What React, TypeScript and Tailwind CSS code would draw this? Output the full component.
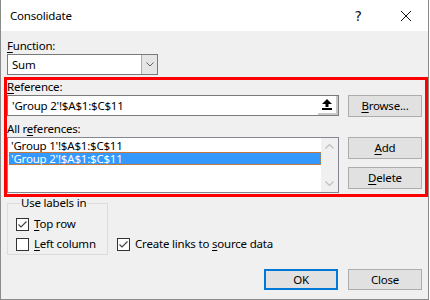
import React from "react";

function U({ children }: { children: React.ReactNode }) {
  return <span className="underline underline-offset-[2px] decoration-[1px]">{children}</span>;
}

function Check({ checked }: { checked: boolean }) {
  return (
    <div className="w-[13px] h-[13px] bg-white border border-[#333] flex items-center justify-center shrink-0">
      {checked && (
        <svg width="11" height="11" viewBox="0 0 11 11">
          <polyline points="1.5,5.5 4,8 9.5,2.5" fill="none" stroke="#444" strokeWidth="1.2" />
        </svg>
      )}
    </div>
  );
}

function Btn({ children, def, h = "h-[22px]" }: { children: React.ReactNode; def?: boolean; h?: string }) {
  return (
    <div
      className={
        "w-[74px] flex items-center justify-center bg-[#e1e1e1] " +
        h +
        " " +
        (def ? "border-2 border-[#0078d7]" : "border border-[#adadad]")
      }
    >
      {children}
    </div>
  );
}

export default function App() {
  return (
    <div className="w-[429px] h-[300px] bg-[#f0f0f0] border-l border-r border-b border-[#8a8a8a] flex flex-col font-['Noto_Sans',sans-serif] text-[11.5px] tracking-[-0.2px] leading-[16px] text-black overflow-hidden">
      {/* title bar */}
      <div className="h-[31px] bg-white flex items-center pl-[9px] shrink-0">
        <span>Consolidate</span>
        <span className="ml-auto text-[14px] tracking-normal font-['DejaVu_Sans',sans-serif] text-[#111] mr-[38px]">?</span>
        <svg width="12" height="12" viewBox="0 0 12 12" className="mr-[16px]">
          <path d="M1 1 L11 11 M11 1 L1 11" stroke="#111" strokeWidth="1" />
        </svg>
      </div>

      {/* body */}
      <div className="flex flex-col">
        <div className="mt-[7px] ml-[6px] h-[16px]">
          <U>F</U>unction:
        </div>
        <div className="ml-[6px] w-[151px] h-[21px] border border-[#7a7a7a] bg-white flex">
          <div className="flex-1 pl-[4px] leading-[19px]">Sum</div>
          <div className="w-[16px] bg-[#e5e5e5] border-l border-[#acacac] flex items-center justify-center">
            <svg width="8" height="5" viewBox="0 0 8 5">
              <polyline points="0.5,0.5 4,4 7.5,0.5" fill="none" stroke="#606060" strokeWidth="1" />
            </svg>
          </div>
        </div>

        {/* red annotation box */}
        <div className="mt-[2px] ml-[3px] w-[424px] h-[120px] border-[3px] border-[#ff0000] flex flex-col">
          <div className="h-[15px] leading-[14px]">
            <U>R</U>eference:
          </div>
          <div className="flex items-start">
            <div className="w-[332px] h-[21px] border border-[#7a7a7a] bg-white flex">
              <div className="flex-1 pl-[4px] leading-[19px]">'Group 2'!$A$1:$C$11</div>
              <div className="w-[20px] h-full bg-[#c8c8c8] pr-[2px] pb-[2px]">
                <div className="w-full h-full bg-white flex items-center justify-center">
                  <svg width="10" height="11" viewBox="0 0 10 11">
                    <path d="M5 0 L10 5 L6.5 5 L6.5 8 L3.5 8 L3.5 5 L0 5 Z" fill="#000" />
                    <rect x="0" y="9" width="10" height="2" fill="#000" />
                  </svg>
                </div>
              </div>
            </div>
            <div className="ml-[9px]">
              <Btn>
                <U>B</U>rowse...
              </Btn>
            </div>
          </div>
          <div className="mt-[4px] h-[16px]">
            All r<U>e</U>ferences:
          </div>
          <div className="flex items-start">
            <div className="w-[332px] h-[56px] border border-[#828790] bg-white flex">
              <div className="flex-1 flex flex-col pt-[1px] pl-[1px] leading-[13px]">
                <div className="h-[13px] pl-[2px]">'Group 1'!$A$1:$C$11</div>
                <div className="h-[13px] pl-[2px] bg-[#3399ff] text-white outline outline-1 outline-dotted outline-[#c87a3c] -outline-offset-1">
                  'Group 2'!$A$1:$C$11
                </div>
              </div>
              <div className="w-[17px] h-full bg-[#f0f0f0] flex flex-col items-center justify-between py-[6px]">
                <svg width="9" height="5" viewBox="0 0 9 5">
                  <polyline points="0.5,4.5 4.5,0.5 8.5,4.5" fill="none" stroke="#c0c0c0" strokeWidth="1.2" />
                </svg>
                <svg width="9" height="5" viewBox="0 0 9 5">
                  <polyline points="0.5,0.5 4.5,4.5 8.5,0.5" fill="none" stroke="#c0c0c0" strokeWidth="1.2" />
                </svg>
              </div>
            </div>
            <div className="ml-[9px] flex flex-col gap-[8px]">
              <Btn>
                <U>A</U>dd
              </Btn>
              <Btn>
                <U>D</U>elete
              </Btn>
            </div>
          </div>
        </div>

        {/* options */}
        <div className="flex items-start ml-[6px] mt-[-1px]">
          <fieldset className="w-[101px] h-[59px] border border-[#dcdcdc] pl-[8px] pt-[4px]">
            <legend className="ml-[4px] px-[1px] leading-[14px]">Use labels in</legend>
            <div className="flex items-center h-[20px] gap-[5px]">
              <Check checked />
              <span>
                <U>T</U>op row
              </span>
            </div>
            <div className="flex items-center h-[20px] gap-[5px]">
              <Check checked={false} />
              <span>
                <U>L</U>eft column
              </span>
            </div>
          </fieldset>
          <div className="ml-[9px] mt-[38px] flex items-center h-[20px] gap-[5px]">
            <Check checked />
            <span>
              Create links to <U>s</U>ource data
            </span>
          </div>
        </div>

        <div className="mt-[14px] flex justify-end gap-[10px] pr-[6px]">
          <Btn def h="h-[21px]">OK</Btn>
          <Btn h="h-[21px]">Close</Btn>
        </div>
      </div>
    </div>
  );
}
